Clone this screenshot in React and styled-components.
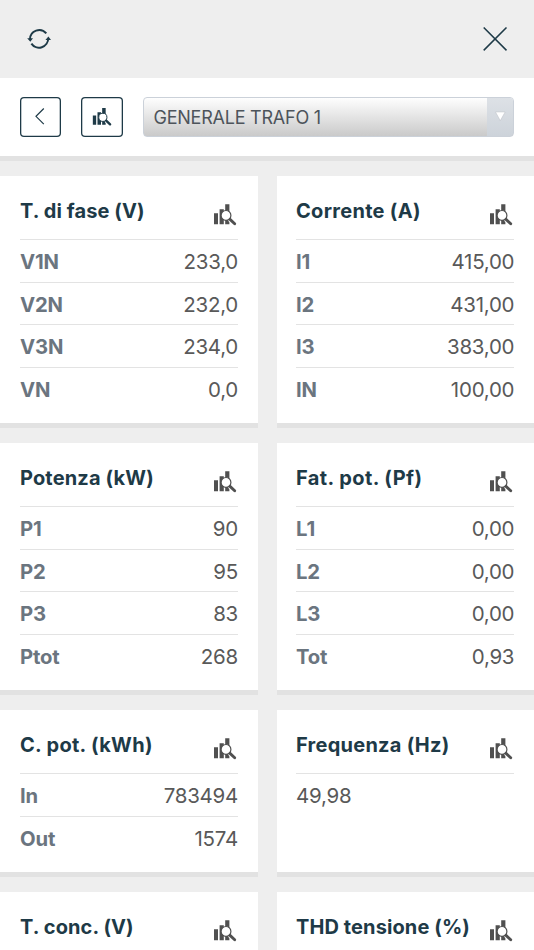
import React from 'react';
import styled, { createGlobalStyle } from 'styled-components';

const GlobalStyle = createGlobalStyle`
  * {
    box-sizing: border-box;
  }
  body {
    margin: 0;
    background: #eeeeee;
    font-family: Inter, 'Liberation Sans', sans-serif;
    overflow: hidden;
  }
`;

const Page = styled.div`
  height: 950px;
  overflow: hidden;
`;

const Header = styled.header`
  display: flex;
  align-items: center;
  justify-content: space-between;
  height: 78px;
  padding: 0 26px;
  color: #1e3a47;
  svg {
    display: block;
  }
`;

const Toolbar = styled.div`
  display: flex;
  height: 83.3px;
  padding: 19px 19.7px 0 19.6px;
  background: #fff;
  border-bottom: 5.3px solid #e2e2e2;
`;

const ToolButton = styled.button`
  display: flex;
  align-items: center;
  justify-content: center;
  width: 41.6px;
  height: 40px;
  margin-right: 20.1px;
  padding: 0;
  background: #fff;
  border: 0;
  box-shadow: inset 0 0 0 1.3px #1e3a47;
  border-radius: 4px;
  color: #1e3a47;
`;

const Select = styled.div`
  display: flex;
  flex: 1;
  height: 40px;
  border: 1px solid #cbd1d9;
  border-radius: 4px;
  overflow: hidden;
  background: linear-gradient(#fefefe, #cacaca);
`;

const SelectText = styled.span`
  flex: 1;
  padding-left: 9.5px;
  line-height: 39px;
  font-size: 18px;
  letter-spacing: -0.23px;
  color: #4d545b;
`;

const SelectArrow = styled.span`
  display: flex;
  justify-content: center;
  width: 26.4px;
  padding-top: 12.5px;
  background: linear-gradient(#dde1e6, #cdd3da);
`;

const Grid = styled.main`
  display: grid;
  grid-template-columns: 257.7px 257.3px;
  column-gap: 19px;
  row-gap: 14.5px;
  padding-top: 14.6px;
`;

const Card = styled.section`
  padding: 0 19.7px 13.8px 20px;
  background: #fff;
  border-bottom: 5.2px solid #e2e2e2;
  &:nth-child(even) {
    padding-left: 19.3px;
  }
`;

const CardHead = styled.div`
  display: flex;
  justify-content: space-between;
  height: 63.3px;
  color: #505050;
  svg {
    margin: 27px 1px 0 0;
  }
`;

const Title = styled.h2`
  margin: 0;
  padding-top: 22.5px;
  font-size: 20px;
  font-weight: 700;
  line-height: 26px;
  letter-spacing: ${(props) => props.$spacing || 0}px;
  white-space: nowrap;
  color: #1e3a47;
`;

const Row = styled.div`
  display: flex;
  justify-content: space-between;
  height: 42.6px;
  border-top: 1px solid #e3e3e3;
  font-size: 20.5px;
  line-height: 44px;
`;

const Label = styled.span`
  font-size: 20.3px;
  font-weight: 700;
  letter-spacing: -0.15px;
  color: #6b757f;
`;

const Value = styled.span`
  font-weight: 400;
  letter-spacing: -0.25px;
  color: #595959;
`;

const ChartIcon = ({ size = 24 }) => (
  <svg width={size} height={size} viewBox="0 0 24 24" fill="none">
    <path
      fill="currentColor"
      d="M1 10.3h4v11H1zM6.6 6.2h4.2v15.1H6.6zM12.2 1.2h4.2v20.1h-4.2z"
    />
    <path stroke="#fff" strokeWidth="4" d="M16.4 16.2l5.7 5.4" />
    <circle cx="13" cy="12.4" r="4.9" fill="#fff" stroke="currentColor" strokeWidth="1.2" />
    <path stroke="currentColor" strokeWidth="2.9" strokeLinecap="round" d="M17 16.4l4.7 4.4" />
  </svg>
);

const RefreshIcon = () => (
  <svg width="26" height="24" viewBox="0 0 26 24" fill="none">
    <path
      stroke="currentColor"
      strokeWidth="2"
      d="M4 12.3A9.2 9.2 0 0 1 20.3 6.4M5.4 16.6A9.2 9.2 0 0 0 22.2 11.2"
    />
    <path fill="currentColor" d="M1.2 11.3h5.8L4.3 14.8zM19.4 12.9h5.6L22.4 9.4z" />
  </svg>
);

const CloseIcon = () => (
  <svg width="26" height="24" viewBox="0 0 26 24" fill="none">
    <path stroke="currentColor" strokeWidth="1.5" d="M1.7.5l22.8 22.9M24.5.5L1.7 23.4" />
  </svg>
);

const cards = [
  { title: 'T. di fase (V)', spacing: 0.1, rows: [['V1N', '233,0'], ['V2N', '232,0'], ['V3N', '234,0'], ['VN', '0,0']] },
  { title: 'Corrente (A)', spacing: 0.3, rows: [['I1', '415,00'], ['I2', '431,00'], ['I3', '383,00'], ['IN', '100,00']] },
  { title: 'Potenza (kW)', spacing: 0.15, rows: [['P1', '90'], ['P2', '95'], ['P3', '83'], ['Ptot', '268']] },
  { title: 'Fat. pot. (Pf)', spacing: 0.42, rows: [['L1', '0,00'], ['L2', '0,00'], ['L3', '0,00'], ['Tot', '0,93']] },
  { title: 'C. pot. (kWh)', spacing: 0.3, rows: [['In', '783494'], ['Out', '1574']] },
  { title: 'Frequenza (Hz)', spacing: 0.25, rows: [[null, '49,98']] },
  { title: 'T. conc. (V)', spacing: 0.1, rows: [[null, '']] },
  { title: 'THD tensione (%)', spacing: 0.1, rows: [[null, '']] },
];

const App = () => {
  return (
    <>
      <GlobalStyle />
      <Page>
        <Header>
          <RefreshIcon />
          <CloseIcon />
        </Header>
        <Toolbar>
          <ToolButton>
            <svg width="12" height="18" viewBox="0 0 12 18" fill="none">
              <path stroke="currentColor" strokeWidth="1.2" d="M9.8 .5L2 8.3l7.8 7.8" />
            </svg>
          </ToolButton>
          <ToolButton>
            <ChartIcon size={20} />
          </ToolButton>
          <Select>
            <SelectText>GENERALE TRAFO 1</SelectText>
            <SelectArrow>
              <svg width="11" height="11" viewBox="0 0 11 11">
                <path fill="#fff" stroke="#b3b7bd" strokeWidth=".4" d="M.5 1h9.6L5.3 9.6z" />
              </svg>
            </SelectArrow>
          </Select>
        </Toolbar>
        <Grid>
          {cards.map((card) => (
            <Card key={card.title}>
              <CardHead>
                <Title $spacing={card.spacing}>{card.title}</Title>
                <ChartIcon />
              </CardHead>
              {card.rows.map(([label, value]) => (
                <Row key={label + value}>
                  {label && <Label>{label}</Label>}
                  <Value>{value}</Value>
                </Row>
              ))}
            </Card>
          ))}
        </Grid>
      </Page>
    </>
  );
};

export default App;
